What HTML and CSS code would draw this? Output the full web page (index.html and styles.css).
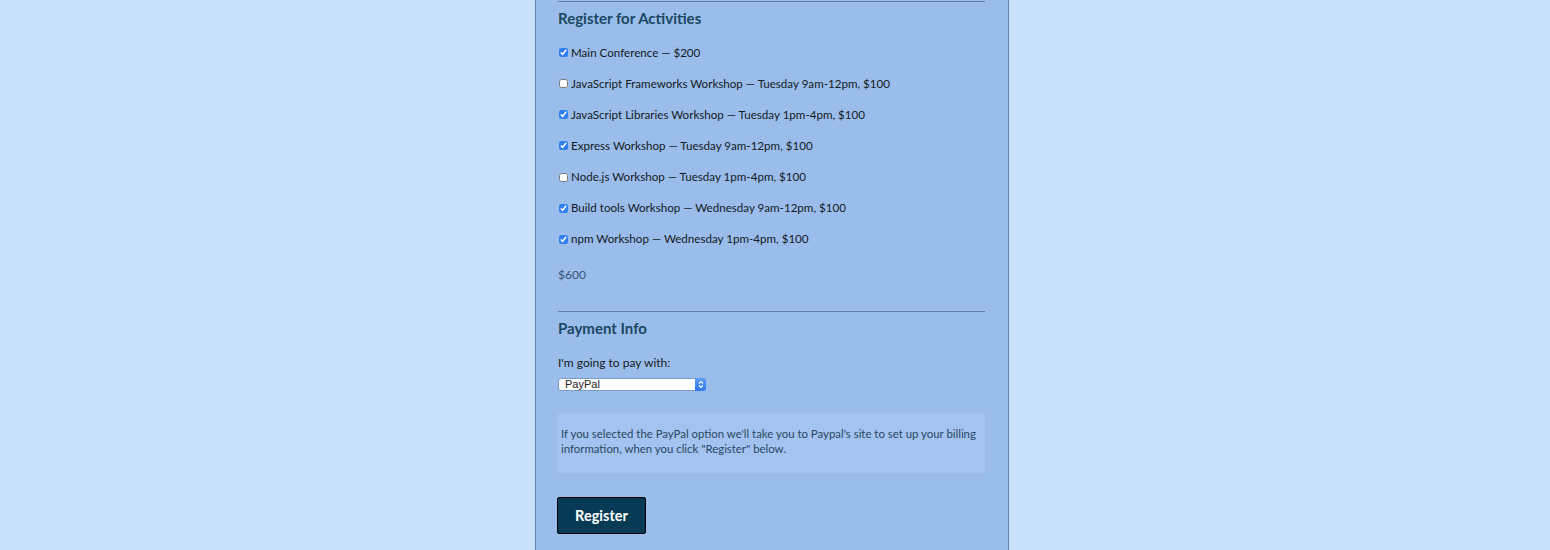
FILE: index.html
```html
<!DOCTYPE html>
<html lang="en">
<head>
<meta charset="utf-8">
<title>Register</title>
<link rel="stylesheet" href="styles.css">
</head>
<body>
<div class="page">
  <form class="container">
    <hr class="rule">
    <h2 class="heading">Register for Activities</h2>
    <div class="activities">
      <label class="row"><input type="checkbox" checked> Main Conference — $200</label>
      <label class="row"><input type="checkbox"> JavaScript Frameworks Workshop — Tuesday 9am-12pm, $100</label>
      <label class="row"><input type="checkbox" checked> JavaScript Libraries Workshop — Tuesday 1pm-4pm, $100</label>
      <label class="row"><input type="checkbox" checked> Express Workshop — Tuesday 9am-12pm, $100</label>
      <label class="row"><input type="checkbox"> Node.js Workshop — Tuesday 1pm-4pm, $100</label>
      <label class="row"><input type="checkbox" checked> Build tools Workshop — Wednesday 9am-12pm, $100</label>
      <label class="row"><input type="checkbox" checked> npm Workshop — Wednesday 1pm-4pm, $100</label>
    </div>
    <p class="total">$600</p>
    <hr class="rule rule-2">
    <h2 class="heading">Payment Info</h2>
    <label class="pay-label" for="payment">I'm going to pay with:</label>
    <div class="select-wrap">
      <select id="payment" class="select">
        <option>PayPal</option>
      </select>
      <span class="select-arrow"><svg width="6" height="9" viewBox="0 0 6 9"><path d="M1 3.5 L3 1.5 L5 3.5 M1 5.5 L3 7.5 L5 5.5" fill="none" stroke="#fff" stroke-width="1.1"/></svg></span>
    </div>
    <div class="note">
      <p>If you selected the PayPal option we'll take you to Paypal's site to set up your billing information, when you click "Register" below.</p>
    </div>
    <button type="button" class="btn">Register</button>
  </form>
</div>
</body>
</html>
```

FILE: styles.css
```css
html, body {
  margin: 0;
  padding: 0;
  background: #cadff9;
  height: 100%;
}
body {
  font-family: "Lato", "Noto Sans", sans-serif;
  overflow: hidden;
}
.page {
  display: flex;
  justify-content: center;
  padding-right: 6px;
  height: 100%;
}
.container {
  box-sizing: border-box;
  width: 474px;
  min-height: 100%;
  background: #9bbdec;
  border-left: 1px solid #5f81b3;
  border-right: 1px solid #5f81b3;
  padding: 1px 23px 20px 22px;
  display: flex;
  flex-direction: column;
  align-items: flex-start;
}
.container > * {
  flex-shrink: 0;
}
.rule {
  width: 100%;
  margin: 0;
  border: 0;
  height: 1px;
  background: #5e80ab;
}
.rule-2 {
  margin-top: 29px;
}
.heading {
  margin: 6px 0 0;
  font-size: 15px;
  line-height: 20px;
  font-weight: 700;
  color: #1a4862;
}
.activities {
  display: flex;
  flex-direction: column;
  margin-top: 8.5px;
}
.row {
  display: flex;
  align-items: center;
  height: 31.15px;
  font-size: 11.6px;
  line-height: 15px;
  color: #141a22;
}
.row input {
  width: 9px;
  height: 9px;
  margin: 1px 3px 0 1px;
  accent-color: #2f7ff0;
}
.total {
  margin: 13px 0 0;
  font-size: 12px;
  line-height: 15px;
  color: #365573;
}
.pay-label {
  margin-top: 16.5px;
  font-size: 12px;
  line-height: 15px;
  color: #141a22;
}
.select-wrap {
  position: relative;
  margin-top: 8px;
  width: 148px;
  height: 13px;
}
.select {
  display: block;
  appearance: none;
  -webkit-appearance: none;
  box-sizing: border-box;
  width: 148px;
  height: 13px;
  margin: 0;
  padding: 0 0 0 6px;
  border: 1px solid #7d9bc6;
  border-radius: 3px;
  background: #ffffff;
  font-family: "Liberation Sans", Arial, sans-serif;
  font-size: 11px;
  line-height: 11px;
  color: #222;
}
.select-arrow {
  position: absolute;
  right: 0;
  top: 0;
  width: 11px;
  height: 13px;
  box-sizing: border-box;
  border-radius: 0 3px 3px 0;
  background: linear-gradient(#5aa0fb, #2f74ee);
  display: flex;
  align-items: center;
  justify-content: center;
}
.note {
  box-sizing: border-box;
  width: 100%;
  margin-top: 22px;
  padding: 13.5px 8px 16.5px 3px;
  background: #a3c3f0;
  border-radius: 2px;
}
.note p {
  margin: 0;
  font-size: 11.4px;
  line-height: 15px;
  color: #2a4862;
}
.btn {
  margin: 24px 0 0 -1px;
  width: 89px;
  height: 37px;
  box-sizing: border-box;
  background: #073a54;
  border: 1px solid #000;
  border-radius: 2px;
  color: #fff;
  font-family: "Lato", "Noto Sans", sans-serif;
  font-weight: 700;
  font-size: 14.5px;
  padding: 0;
}
```
